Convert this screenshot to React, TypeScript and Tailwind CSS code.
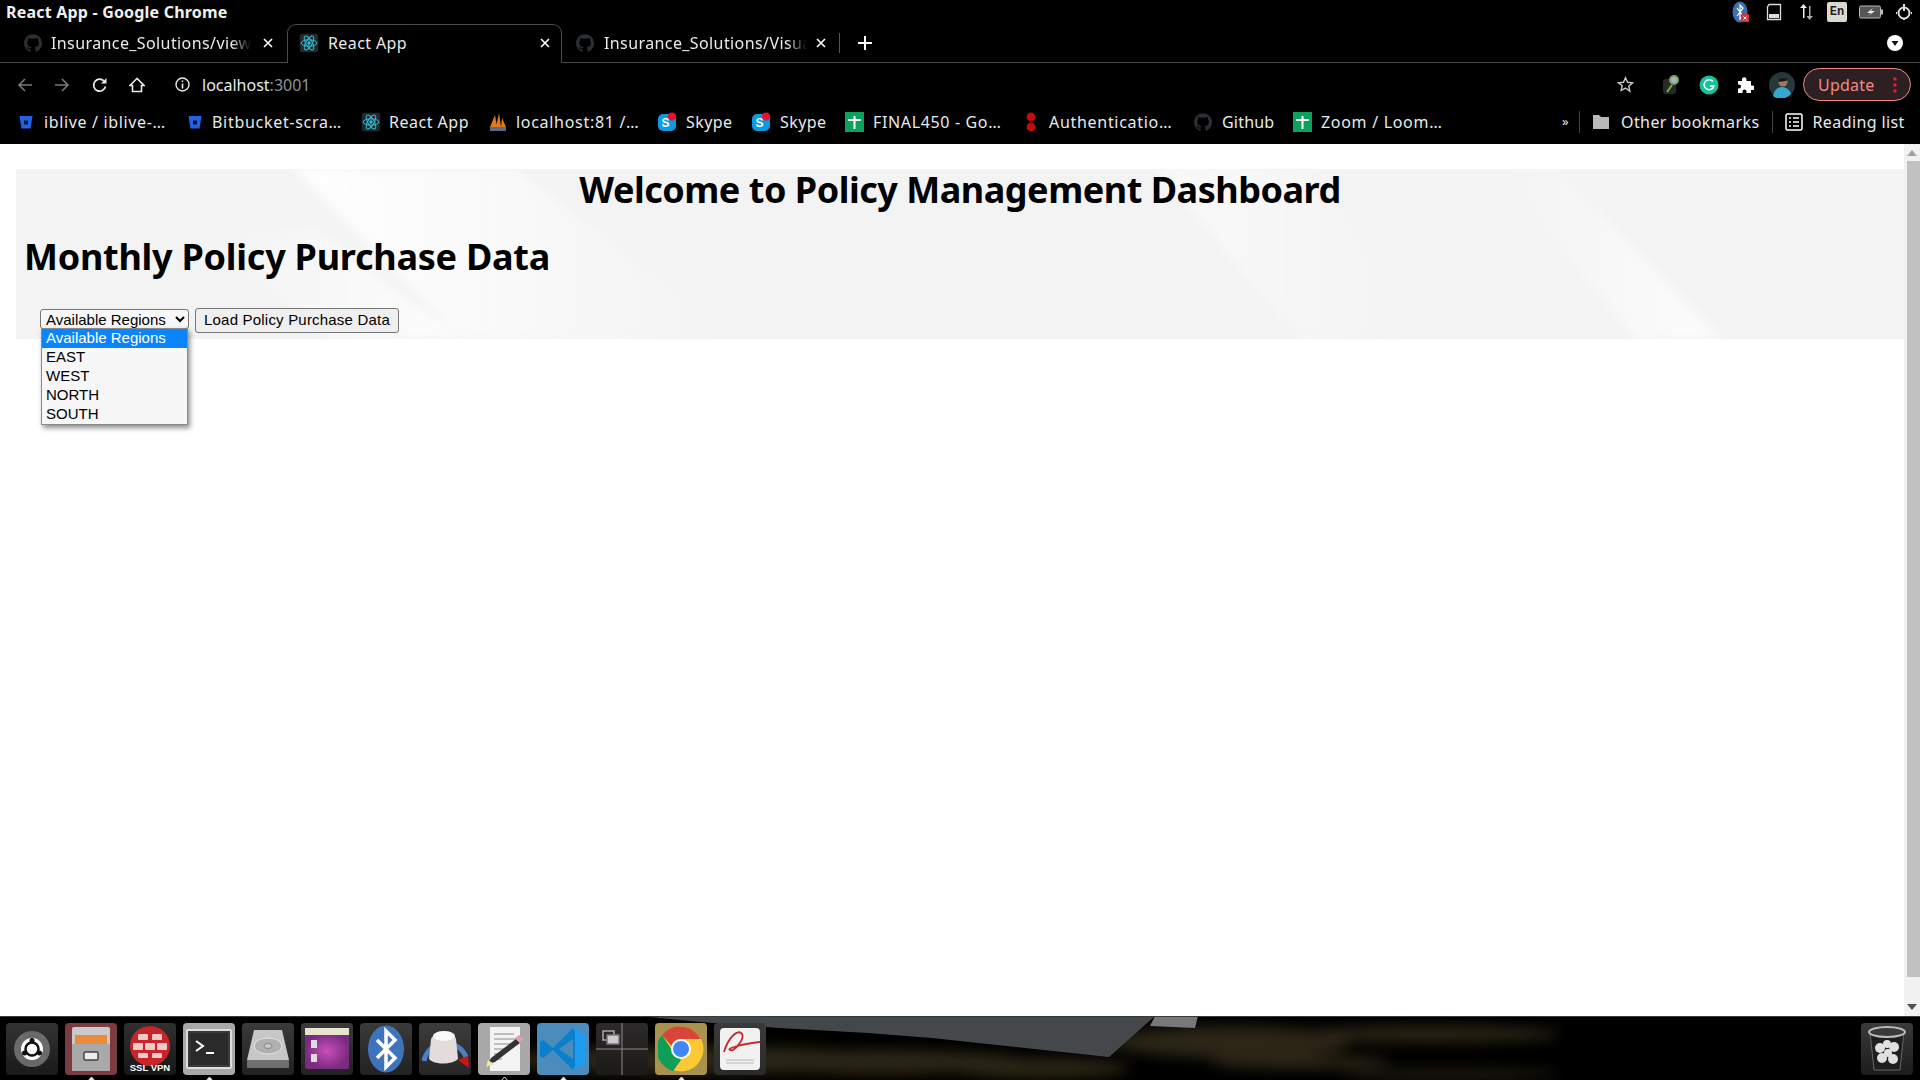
import React from "react";

const REGIONS = ["Available Regions", "EAST", "WEST", "NORTH", "SOUTH"];

const REACT_PATH = "M12 12m-2 0a2 2 0 1 0 4 0a2 2 0 1 0 -4 0";

function ReactIcon() {
  return (
    <svg width="20" height="20" viewBox="0 0 24 24" className="shrink-0">
      <rect x="1" y="1" width="22" height="22" rx="3" fill="#23272e" />
      <path d={REACT_PATH} fill="#2ec4d6" />
      <g fill="none" stroke="#2ec4d6" strokeWidth="1.2">
        <ellipse cx="12" cy="12" rx="9.5" ry="3.8" />
        <ellipse cx="12" cy="12" rx="9.5" ry="3.8" transform="rotate(60 12 12)" />
        <ellipse cx="12" cy="12" rx="9.5" ry="3.8" transform="rotate(120 12 12)" />
      </g>
    </svg>
  );
}

function GithubIcon() {
  return (
    <svg width="20" height="20" viewBox="0 0 24 24" className="shrink-0">
      <path
        fill="#2b2f33"
        d="M12 1.5C6 1.5 1.2 6.3 1.2 12.3c0 4.8 3.1 8.8 7.4 10.2.5.1.7-.2.7-.5v-1.9c-3 .7-3.6-1.4-3.6-1.4-.5-1.2-1.2-1.6-1.2-1.6-1-.7.1-.7.1-.7 1.1.1 1.7 1.1 1.7 1.1 1 1.7 2.5 1.2 3.1.9.1-.7.4-1.2.7-1.5-2.4-.3-4.9-1.2-4.9-5.3 0-1.2.4-2.1 1.1-2.9-.1-.3-.5-1.4.1-2.8 0 0 .9-.3 3 1.1a10 10 0 0 1 5.4 0c2.1-1.4 3-1.1 3-1.1.6 1.5.2 2.5.1 2.8.7.8 1.1 1.7 1.1 2.9 0 4.1-2.5 5-4.9 5.3.4.3.7 1 .7 2v3c0 .3.2.6.7.5 4.3-1.4 7.4-5.4 7.4-10.2C22.8 6.3 18 1.5 12 1.5z"
      />
    </svg>
  );
}

function BitbucketIcon() {
  return (
    <svg width="16" height="16" viewBox="0 0 16 16" className="shrink-0">
      <path d="M1.5 2h13l-2 12.5h-9z" fill="#1f63e8" />
      <rect x="6" y="6.5" width="4" height="4" fill="#0a1330" />
    </svg>
  );
}

function SkypeIcon() {
  return (
    <svg width="18" height="20" viewBox="0 0 18 20" className="shrink-0">
      <rect x="0" y="2" width="18" height="17" rx="5" fill="#0b9be3" />
      <text x="3.5" y="15" fontSize="12" fontWeight="700" fill="#fff" fontFamily="Liberation Sans, sans-serif">S</text>
      <circle cx="14" cy="4.5" r="4" fill="#e8112d" />
    </svg>
  );
}

function SheetIcon() {
  return (
    <svg width="19" height="20" viewBox="0 0 19 20" className="shrink-0">
      <rect width="19" height="20" fill="#0da25a" />
      <path d="M3 8h13M9.5 4v13" stroke="#fff" strokeWidth="2" />
    </svg>
  );
}

function XamppIcon() {
  return (
    <svg width="18" height="20" viewBox="0 0 18 20" className="shrink-0">
      <path d="M1 15 6 3l2 12zM7 15 10 1l2 14zM12 15l1-9 4 9z" fill="#e07b1a" />
      <rect x="1" y="15" width="16" height="4" fill="#5c6a8c" />
    </svg>
  );
}

function AuthIcon() {
  return (
    <svg width="10" height="20" viewBox="0 0 10 20" className="shrink-0">
      <circle cx="5" cy="5" r="4.4" fill="#c40d0d" />
      <circle cx="5" cy="15" r="4.4" fill="#c40d0d" />
      <rect x="3.5" y="8" width="3" height="4" fill="#8c0808" />
    </svg>
  );
}

const BOOKMARKS = [
  { title: "iblive / iblive-…", icon: <BitbucketIcon />, cls: "w-[169px] gap-[10px] tracking-[0.65px]" },
  { title: "Bitbucket-scra…", icon: <BitbucketIcon />, cls: "w-[174px] gap-[9px] tracking-[0.7px]" },
  { title: "React App", icon: <ReactIcon />, cls: "w-[128px] gap-[8px] tracking-[0.5px]" },
  { title: "localhost:81 /…", icon: <XamppIcon />, cls: "w-[169px] gap-[9px] tracking-[0.7px]" },
  { title: "Skype", icon: <SkypeIcon />, cls: "w-[94px] gap-[10px]" },
  { title: "Skype", icon: <SkypeIcon />, cls: "w-[93px] gap-[10px]" },
  { title: "FINAL450 - Go…", icon: <SheetIcon />, cls: "w-[181px] gap-[9px] tracking-[0.65px]" },
  { title: "Authenticatio…", icon: <AuthIcon />, cls: "w-[167px] gap-[13px] tracking-[0.7px]" },
  { title: "Github", icon: <GithubIcon />, cls: "w-[100px] gap-[9px] tracking-[0.2px]" },
  { title: "Zoom / Loom…", icon: <SheetIcon />, cls: "w-[200px] gap-[9px] tracking-[0.7px]" },
];

function CloseX() {
  return (
    <svg width="10" height="10" viewBox="0 0 10 10" className="shrink-0">
      <path d="M1 1l8 8M9 1l-8 8" stroke="#fff" strokeWidth="1.6" />
    </svg>
  );
}

function TitleBar() {
  return (
    <div className="flex h-6 items-center justify-between pl-[6px] pr-[7px]">
      <span className="text-[16px] font-bold tracking-[0.2px] text-[#f1f1f1]">React App - Google Chrome</span>
      <div className="flex items-center">
        <svg width="18" height="22" viewBox="0 0 18 22" className="mr-[16px]">
          <ellipse cx="8" cy="11" rx="7.5" ry="10.5" fill="#3f6fb0" />
          <path d="M5 7l6 8-3 3V4l3 3-6 8" fill="none" stroke="#fff" strokeWidth="1.2" />
          <rect x="9" y="13" width="8" height="8" rx="1" fill="#d9333a" />
          <path d="M11.5 15.5l3 3M14.5 15.5l-3 3" stroke="#fff" />
        </svg>
        <svg width="16" height="18" viewBox="0 0 16 18" className="mr-[16px]">
          <path d="M3 1.5h11.5v15H1.5V4z" fill="none" stroke="#ddd" strokeWidth="1.3" />
          <rect x="3" y="11" width="10" height="4" fill="#ddd" />
        </svg>
        <svg width="16" height="18" viewBox="0 0 16 18" className="mr-[13px]">
          <path d="M5 15V5H2l3.5-4L9 5H6.500v10z" fill="#eee" />
          <path d="M11 3v10H8.500l3 4 3.500-4H12.500V3z" fill="#aaa" />
        </svg>
        <span className="mr-[12px] flex h-5 w-5 items-center justify-center rounded-[2px] bg-[#dcd9d2] font-['Liberation_Mono',monospace] text-[12px] font-bold text-[#222]">
          En
        </span>
        <svg width="24" height="14" viewBox="0 0 24 14" className="mr-[12px]">
          <rect x="0.5" y="1" width="21" height="12" rx="1.5" fill="#555" stroke="#bbb" />
          <rect x="22" y="4.500" width="2" height="5" fill="#bbb" />
          <path d="M14 3l-6 5h4l-3 3 7-5h-4z" fill="#eee" />
        </svg>
        <svg width="18" height="18" viewBox="0 0 18 18">
          <circle cx="9" cy="10" r="5.500" fill="none" stroke="#ddd" strokeWidth="2" />
          <path d="M9 1v7" stroke="#ddd" strokeWidth="2" />
          <path d="M9 1v2M9 15v2M2 10H1M17 10h-1" stroke="#ddd" strokeWidth="2" />
        </svg>
      </div>
    </div>
  );
}

function TabStrip() {
  return (
    <div className="flex h-[39px] items-stretch border-b border-[#4a4a4a] text-[16px] tracking-[0.4px]">
      <div className="flex w-[287px] items-center pl-[23px]">
        <GithubIcon />
        <span className="ml-2 w-[200px] overflow-hidden whitespace-nowrap text-[#e8eaed] [mask-image:linear-gradient(to_right,black_90%,transparent)]">
          Insurance_Solutions/views
        </span>
        <span className="ml-[12px]"><CloseX /></span>
      </div>
      <div className="flex h-[39px] w-[275px] items-center rounded-t-[9px] border border-b-0 border-[#4a4a4a] bg-black pb-[2px] pl-[11px]">
        <ReactIcon />
        <span className="ml-[9px] w-[212px] text-[#e8eaed]">React App</span>
        <CloseX />
      </div>
      <div className="flex w-[277px] items-center pl-[13px]">
        <GithubIcon />
        <span className="ml-[9px] w-[203px] overflow-hidden whitespace-nowrap text-[#e8eaed] [mask-image:linear-gradient(to_right,black_90%,transparent)]">
          Insurance_Solutions/Visual
        </span>
        <span className="ml-[9px]"><CloseX /></span>
      </div>
      <div className="my-[9px] w-px bg-[#555]" />
      <div className="ml-[18px] flex items-center">
        <svg width="14" height="14" viewBox="0 0 14 14">
          <path d="M7 0v14M0 7h14" stroke="#fff" strokeWidth="2" />
        </svg>
      </div>
      <div className="ml-auto mr-[17px] flex items-center">
        <svg width="16" height="16" viewBox="0 0 16 16">
          <circle cx="8" cy="8" r="8" fill="#fff" />
          <path d="M4.500 6h7L8 11z" fill="#111" />
        </svg>
      </div>
    </div>
  );
}

function Toolbar() {
  return (
    <div className="flex h-[43px] items-center pl-[17px] pr-[9px]">
      <svg width="16" height="16" viewBox="0 0 16 16" className="mr-[21px]">
        <path d="M15 8H2M8 2L2 8l6 6" fill="none" stroke="#77797d" strokeWidth="1.6" />
      </svg>
      <svg width="16" height="16" viewBox="0 0 16 16" className="mr-[22px]">
        <path d="M1 8h13M8 2l6 6-6 6" fill="none" stroke="#77797d" strokeWidth="1.6" />
      </svg>
      <svg width="16" height="16" viewBox="0 0 16 16" className="mr-[21px]">
        <path d="M13.500 9.500A6 6 0 1 1 12 4" fill="none" stroke="#e8eaed" strokeWidth="1.7" />
        <path d="M14.500 1v5.500H9z" fill="#e8eaed" />
      </svg>
      <svg width="16" height="16" viewBox="0 0 16 16" className="mr-[30px]">
        <path d="M8 1.500L1 8.500h2.500v6h9v-6H15z" fill="none" stroke="#e8eaed" strokeWidth="1.6" />
      </svg>
      <svg width="15" height="15" viewBox="0 0 15 15" className="mr-[12px]">
        <circle cx="7.500" cy="7.500" r="6.500" fill="none" stroke="#e8eaed" strokeWidth="1.400" />
        <path d="M7.500 6.500v5M7.500 3.500v1.600" stroke="#e8eaed" strokeWidth="1.600" />
      </svg>
      <span className="text-[16px] text-[#e8eaed]">
        localhost<span className="text-[#8f9195]">:3001</span>
      </span>
      <svg width="17" height="17" viewBox="0 0 24 24" className="ml-auto mr-[28px]">
        <path d="M12 2.500l2.900 6.400 7 .8-5.200 4.700 1.400 6.900L12 17l-6.100 3.300 1.400-6.900L2.100 9.700l7-.8z" fill="none" stroke="#c8c8c8" strokeWidth="2" />
      </svg>
      <svg width="18" height="22" viewBox="0 0 18 22" className="mr-[19px]">
        <rect x="1" y="5" width="13" height="15" rx="3" fill="#262b26" />
        <path d="M5 18l5-7" stroke="#78b24a" strokeWidth="2" />
        <circle cx="12" cy="6" r="5" fill="#7ea15d" />
        <circle cx="12" cy="6" r="3" fill="#a5b3c5" />
      </svg>
      <svg width="20" height="20" viewBox="0 0 20 20" className="mr-[17px]">
        <circle cx="10" cy="10" r="9.500" fill="#15c39a" />
        <path d="M14 6.500a5 5 0 1 0 1 4.500h-4" fill="none" stroke="#fff" strokeWidth="1.500" />
      </svg>
      <svg width="18" height="18" viewBox="0 0 18 18" className="mr-[15px]">
        <path d="M2 5h4V3.500a2 2 0 0 1 4.500 0V5H15v4.500h1.300a2.200 2.200 0 0 1 0 4.500H15v3H10.500v-1.500a2 2 0 0 0-4 0V17H2v-4.500h1a2 2 0 0 0 0-4H2z" fill="#fff" />
      </svg>
      <svg width="26" height="26" viewBox="0 0 26 26" className="mr-[8px]">
        <circle cx="13" cy="13" r="13" fill="#27383c" />
        <path d="M4 24c1-6 5-9 9-9s8 3 9 7a13 13 0 0 1-18 2z" fill="#35a8cf" />
        <circle cx="14" cy="10" r="4.500" fill="#9a7b62" />
        <path d="M9.500 9c0-4 7-5 9-1l-2 1-7 1z" fill="#15191b" />
      </svg>
      <div className="flex h-[33px] w-[108px] items-center rounded-full border border-[#f28b82] bg-[#2d2022] pl-[14px]">
        <span className="text-[16px] tracking-[0.2px] text-[#f28b82]">Update</span>
        <svg width="4" height="16" viewBox="0 0 4 16" className="ml-[19px]">
          <circle cx="2" cy="2" r="1.700" fill="#e5222b" />
          <circle cx="2" cy="8" r="1.700" fill="#e5222b" />
          <circle cx="2" cy="14" r="1.700" fill="#e5222b" />
        </svg>
      </div>
    </div>
  );
}

function BookmarksBar() {
  return (
    <div className="flex h-[38px] items-center whitespace-nowrap pb-[6px] pl-[18px] text-[16px] tracking-[0.4px] text-[#e8eaed]">
      {BOOKMARKS.map((b, i) => (
        <div key={i} className={"flex shrink-0 items-center " + b.cls}>
          {b.icon}
          <span>{b.title}</span>
        </div>
      ))}
      <span className="ml-[69px] text-[13px]">»</span>
      <div className="ml-[10px] h-[22px] w-px bg-[#444]" />
      <svg width="18" height="16" viewBox="0 0 18 16" className="ml-[12px] shrink-0">
        <path d="M1 1h6l2 2h8v12H1z" fill="#b9b9b9" />
      </svg>
      <span className="ml-[11px] shrink-0">Other bookmarks</span>
      <div className="ml-[13px] h-[22px] w-px shrink-0 bg-[#444]" />
      <svg width="18" height="18" viewBox="0 0 18 18" className="ml-[12px] shrink-0">
        <rect x="1" y="1" width="16" height="16" rx="1.500" fill="none" stroke="#fff" strokeWidth="1.500" />
        <path d="M4 5h2M8 5h6M4 9h2M8 9h6M4 13h2M8 13h6" stroke="#fff" strokeWidth="1.500" />
      </svg>
      <span className="ml-[9px] shrink-0">Reading list</span>
    </div>
  );
}

// background picture of the banner: soft light bands running down to the right
function BannerStreaks() {
  return (
    <svg className="absolute inset-0 h-full w-full" viewBox="0 0 1888 170" preserveAspectRatio="none">
      <defs>
        <filter id="soft"><feGaussianBlur stdDeviation="5" /></filter>
        <linearGradient id="fadeRight">
          <stop offset="0" stopColor="#fff" stopOpacity="1" />
          <stop offset="1" stopColor="#fff" stopOpacity="0" />
        </linearGradient>
        <linearGradient id="fadeLeft">
          <stop offset="0" stopColor="#fff" stopOpacity="0" />
          <stop offset="1" stopColor="#fff" stopOpacity="0.8" />
        </linearGradient>
        <linearGradient id="fadeRightSoft">
          <stop offset="0" stopColor="#fff" stopOpacity="0.55" />
          <stop offset="1" stopColor="#fff" stopOpacity="0" />
        </linearGradient>
      </defs>
      <g filter="url(#soft)">
        <polygon points="278,0 500,0 720,170 445,170" fill="url(#fadeRight)" />
        <polygon points="180,70 300,60 445,170 320,170" fill="url(#fadeLeft)" />
        <polygon points="1141,0 1298,0 1412,170 1284,170" fill="url(#fadeRightSoft)" />
        <polygon points="1480,0 1541,0 1705,170 1620,170" fill="url(#fadeLeft)" />
      </g>
    </svg>
  );
}

function RegionDropdown() {
  return (
    <div className="absolute left-[41px] top-[184px] z-10 w-[147px] border border-[#8a8a8a] bg-[#f7f7f7] font-['Liberation_Sans',sans-serif] text-[15px] leading-[17px] text-black shadow-[2px_3px_5px_rgba(0,0,0,0.45)]">
      {REGIONS.map((r, i) => (
        <div key={r} className={i === 0 ? "h-[19px] bg-[#0a84ff] pl-[4px] text-white" : "h-[19px] pl-[4px]"}>
          {r}
        </div>
      ))}
    </div>
  );
}

function PageContent() {
  return (
    <div className="relative flex-1 bg-white pl-4 pt-[25px]">
      <div className="relative h-[170px] bg-[#f3f3f3] text-black">
        <BannerStreaks />
        <div className="relative">
          <h1 className="text-center text-[36px] font-bold leading-[42px] tracking-[-0.48px]">Welcome to Policy Management Dashboard</h1>
          <h2 className="mt-[25px] pl-[8px] text-[36px] font-bold leading-[42px] tracking-[-0.25px]">Monthly Policy Purchase Data</h2>
          <div className="mt-[30px] flex items-start pl-[24px] font-['Liberation_Sans',sans-serif] text-[15px] text-black">
            <select className="mt-px h-[20px] w-[149px] rounded-[3px] border border-[#767676] bg-[#f7f7f7] pl-px outline-none">
              {REGIONS.map((r) => (
                <option key={r}>{r}</option>
              ))}
            </select>
            <button className="ml-[6px] h-[25px] w-[204px] rounded-[3px] border border-[#767676] bg-[#efefef] tracking-[0.2px]">
              Load Policy Purchase Data
            </button>
          </div>
        </div>
      </div>
      <RegionDropdown />
    </div>
  );
}

function Scrollbar() {
  return (
    <div className="flex w-4 flex-col items-center bg-[#f1f1f1]">
      <svg width="10" height="6" viewBox="0 0 10 6" className="mt-[6px]">
        <path d="M5 0l5 6H0z" fill="#a3a3a3" />
      </svg>
      <div className="mt-[5px] ml-[2px] h-[816px] w-[13px] bg-[#c1c1c1]" />
      <svg width="10" height="6" viewBox="0 0 10 6" className="mt-auto mb-[6px]">
        <path d="M5 6L0 0h10z" fill="#505050" />
      </svg>
    </div>
  );
}

function Tile({ bg, children, dots }: { bg: string; children: React.ReactNode; dots?: React.ReactNode }) {
  return (
    <div className={"relative flex h-[52px] w-[52px] shrink-0 items-center justify-center overflow-visible rounded-[4px] " + bg}>
      {children}
      {dots}
    </div>
  );
}

function Pip({ hollow }: { hollow?: boolean }) {
  return (
    <svg width="9" height="5" viewBox="0 0 9 5" className="absolute -bottom-[7px] left-[22px]">
      <path d="M4.500 0L9 5H0z" fill={hollow ? "none" : "#e6e6e6"} stroke="#e6e6e6" />
    </svg>
  );
}

function DockWallpaper() {
  return (
    <svg className="absolute inset-0 h-full w-full" viewBox="0 0 1920 64" preserveAspectRatio="none">
      <defs>
        <filter id="blurDock"><feGaussianBlur stdDeviation="7" /></filter>
      </defs>
      <rect width="1920" height="64" fill="#000" />
      <g filter="url(#blurDock)" fill="#4a4128" opacity="0.6">
        <ellipse cx="880" cy="46" rx="150" ry="12" />
        <ellipse cx="1230" cy="26" rx="120" ry="16" />
        <ellipse cx="1430" cy="18" rx="130" ry="8" />
        <ellipse cx="1450" cy="58" rx="110" ry="4" />
        <ellipse cx="1300" cy="46" rx="90" ry="7" />
        <ellipse cx="700" cy="44" rx="190" ry="14" />
        <ellipse cx="1040" cy="52" rx="90" ry="10" />
      </g>
      <polygon points="640,0 1155,0 1109,41 932,22 868,17 780,12 700,6" fill="#45484b" />
      <polygon points="1155,0 1198,0 1195,12 1150,10" fill="#77787a" />
      <rect width="1920" height="1" fill="#3a3a3a" />
    </svg>
  );
}

function Dock() {
  return (
    <div className="relative h-[64px] overflow-hidden">
      <DockWallpaper />
      <div className="relative flex h-full items-center pl-[6px] pt-[1px]">
        <div className="flex gap-[7px]">
          <Tile bg="bg-gradient-to-b from-[#333] to-[#1a1a1a]">
            <svg width="40" height="40" viewBox="0 0 40 40">
              <circle cx="20" cy="20" r="18" fill="#6a6a6a" />
              <circle cx="20" cy="20" r="11" fill="#fff" />
              <circle cx="20" cy="20" r="6.500" fill="none" stroke="#111" strokeWidth="2.500" />
              <circle cx="20" cy="11.500" r="2.500" fill="#111" />
              <circle cx="12.500" cy="24" r="2.500" fill="#111" />
              <circle cx="27.500" cy="24" r="2.500" fill="#111" />
            </svg>
          </Tile>
          <Tile bg="bg-[#7c3a42]" dots={<Pip />}>
            <svg width="40" height="46" viewBox="0 0 40 46">
              <rect x="1" y="1" width="38" height="44" rx="2" fill="#c9c9c9" />
              <rect x="4" y="9" width="32" height="9" fill="#e98b3a" />
              <rect x="1" y="18" width="38" height="27" fill="#a9a9a9" />
              <rect x="13" y="26" width="14" height="8" rx="1" fill="#eee" stroke="#444" strokeWidth="1.500" />
            </svg>
          </Tile>
          <Tile bg="bg-gradient-to-b from-[#303030] to-[#171717]">
            <svg width="46" height="48" viewBox="0 0 46 48">
              <circle cx="23" cy="21" r="20" fill="#c8242c" />
              <g fill="#f2c9c9">
                <rect x="11" y="9" width="10" height="6" rx="1" />
                <rect x="25" y="9" width="10" height="6" rx="1" />
                <rect x="6" y="18" width="10" height="7" rx="1" />
                <rect x="18" y="18" width="10" height="7" rx="1" />
                <rect x="30" y="18" width="10" height="7" rx="1" />
                <rect x="11" y="28" width="10" height="5" rx="1" />
                <rect x="25" y="28" width="10" height="5" rx="1" />
              </g>
              <text x="23" y="46" textAnchor="middle" fontSize="9.500" fontWeight="700" fill="#fff" fontFamily="Liberation Sans, sans-serif">SSL VPN</text>
            </svg>
          </Tile>
          <Tile bg="bg-[#a9a9a9]" dots={<Pip />}>
            <svg width="46" height="40" viewBox="0 0 46 40">
              <rect x="1" y="1" width="44" height="38" rx="1" fill="#3a3a3a" stroke="#ddd" strokeWidth="2" />
              <rect x="4" y="4" width="38" height="32" fill="#2a2a2a" />
              <path d="M10 12l7 5-7 5" fill="none" stroke="#fff" strokeWidth="2" />
              <path d="M20 24h8" stroke="#fff" strokeWidth="2" />
            </svg>
          </Tile>
          <Tile bg="bg-gradient-to-b from-[#3a3a3a] to-[#222]">
            <svg width="46" height="44" viewBox="0 0 46 44">
              <path d="M9 3h28l7 30H2z" fill="#c7c7c7" />
              <ellipse cx="23" cy="19" rx="14" ry="8" fill="#b0b0b0" stroke="#e5e5e5" />
              <ellipse cx="23" cy="19" rx="4" ry="2.500" fill="#c7c7c7" stroke="#888" />
              <rect x="2" y="33" width="42" height="8" fill="#6f6f6f" />
            </svg>
          </Tile>
          <Tile bg="bg-gradient-to-b from-[#3a3a3a] to-[#222]">
            <svg width="46" height="44" viewBox="0 0 46 44">
              <defs>
                <radialGradient id="purple"><stop offset="0" stopColor="#c850b8" /><stop offset="1" stopColor="#7a2a80" /></radialGradient>
              </defs>
              <rect x="1" y="6" width="44" height="36" rx="2" fill="url(#purple)" />
              <rect x="1" y="1" width="44" height="7" fill="#e8e4cc" />
              <rect x="7" y="13" width="6" height="8" fill="#ddd" />
              <rect x="7" y="27" width="6" height="8" fill="#ddd" />
            </svg>
          </Tile>
          <Tile bg="bg-gradient-to-b from-[#3a3a3a] to-[#222]">
            <svg width="38" height="48" viewBox="0 0 38 48">
              <ellipse cx="19" cy="24" rx="18" ry="23.500" fill="#3f74bd" />
              <path d="M10 15l18 18-9 9V6l9 9-18 18" fill="none" stroke="#fff" strokeWidth="3.500" />
            </svg>
          </Tile>
          <Tile bg="bg-gradient-to-b from-[#3c3c3c] to-[#262626]">
            <svg width="50" height="44" viewBox="0 0 50 44">
              <path d="M4 34A22 22 0 0 1 46 30" fill="none" stroke="#4d7fc0" strokeWidth="5" />
              <path d="M38 33l10-4 1 12z" fill="#d01414" />
              <path d="M11 12C15 3 33 3 36 12l2 20c-6 6-24 6-29 0z" fill="#e3dcdc" />
              <ellipse cx="24" cy="9" rx="11" ry="5" fill="#fafafa" />
            </svg>
          </Tile>
          <Tile bg="bg-[#a8a8a8]" dots={<Pip hollow />}>
            <svg width="44" height="46" viewBox="0 0 44 46">
              <rect x="8" y="1" width="30" height="44" fill="#f3f3f3" />
              <path d="M12 8h20M12 13h22M12 18h18M12 23h14M12 28h10M12 33h8" stroke="#8a8a8a" />
              <path d="M6 38l3-6 25-19 4 4-25 19z" fill="#333" />
              <path d="M33 12l4-3 4 4-3 4z" fill="#e59ac0" />
              <path d="M4 41l2-7 6 4z" fill="#f0e6a0" />
            </svg>
          </Tile>
          <Tile bg="bg-[#4b8cbc]" dots={<Pip />}>
            <svg width="48" height="44" viewBox="0 0 48 44">
              <path d="M34 1l12 6v30l-12 6z" fill="#1f9cf0" />
              <path d="M34 1L14 21 4 13 1 15v14l3 2 10-8 20 20 2-4V5z" fill="#0a7fcb" />
              <path d="M34 12v20L20 22z" fill="#4b8cbc" />
            </svg>
          </Tile>
          <Tile bg="bg-gradient-to-b from-[#2e2a2c] to-[#1b1a15]">
            <svg width="52" height="52" viewBox="0 0 52 52">
              <path d="M26 0v52M0 26h52" stroke="#8a8a8a" />
              <rect x="7" y="8" width="11" height="9" fill="none" stroke="#a9a9a9" strokeWidth="1.500" />
              <rect x="11" y="12" width="12" height="9" fill="#d0c8cc" stroke="#777" strokeWidth="1.500" />
            </svg>
          </Tile>
          <Tile bg="bg-[#a8924e]" dots={<Pip />}>
            <svg width="46" height="46" viewBox="0 0 46 46">
              <circle cx="23" cy="23" r="22.500" fill="#fcc934" />
              <path d="M23 0.500A22.500 22.500 0 0 1 43 13H23a10 10 0 0 0-9.500 7L4 9A22.500 22.500 0 0 1 23 0.500z" fill="#d9453a" />
              <path d="M4 9l10 15 9 10-8 11A22.500 22.500 0 0 1 4 9z" fill="#0f9d58" />
              <circle cx="23" cy="23" r="10" fill="#fff" />
              <circle cx="23" cy="23" r="8" fill="#4285f4" />
            </svg>
          </Tile>
          <Tile bg="bg-gradient-to-b from-[#3a3a3a] to-[#2a2a2a]">
            <svg width="40" height="42" viewBox="0 0 40 42">
              <rect width="40" height="42" rx="4" fill="#f1f1f1" />
              <path d="M4 24C8 10 18 0 22 6c3 5-8 18-12 16C6 20 24 16 40 14" fill="none" stroke="#c8282e" strokeWidth="1.800" />
              <path d="M6 32h28M6 35h28" stroke="#bbb" />
            </svg>
          </Tile>
        </div>
        <div className="ml-auto mr-[7px]">
          <Tile bg="bg-gradient-to-b from-[#3a3a3a] to-[#1c1c1c]">
            <svg width="38" height="46" viewBox="0 0 38 46">
              <path d="M2 6l4 38h26l4-38z" fill="#1e1e1e" stroke="#666" />
              <ellipse cx="19" cy="6" rx="18" ry="5" fill="#3a3a3a" stroke="#bbb" strokeWidth="2" />
              <g fill="#e0e0e0">
                <circle cx="12" cy="22" r="5" />
                <circle cx="19" cy="18" r="4" />
                <circle cx="26" cy="21" r="5" />
                <circle cx="14" cy="32" r="5" />
                <circle cx="20" cy="27" r="4" />
                <circle cx="25" cy="33" r="5" />
              </g>
            </svg>
          </Tile>
        </div>
      </div>
    </div>
  );
}

export default function App() {
  return (
    <div className="flex h-[1080px] w-[1920px] flex-col overflow-hidden bg-black font-['Noto_Sans',sans-serif]">
      <TitleBar />
      <TabStrip />
      <Toolbar />
      <BookmarksBar />
      <div className="flex h-[872px]">
        <PageContent />
        <Scrollbar />
      </div>
      <Dock />
    </div>
  );
}
